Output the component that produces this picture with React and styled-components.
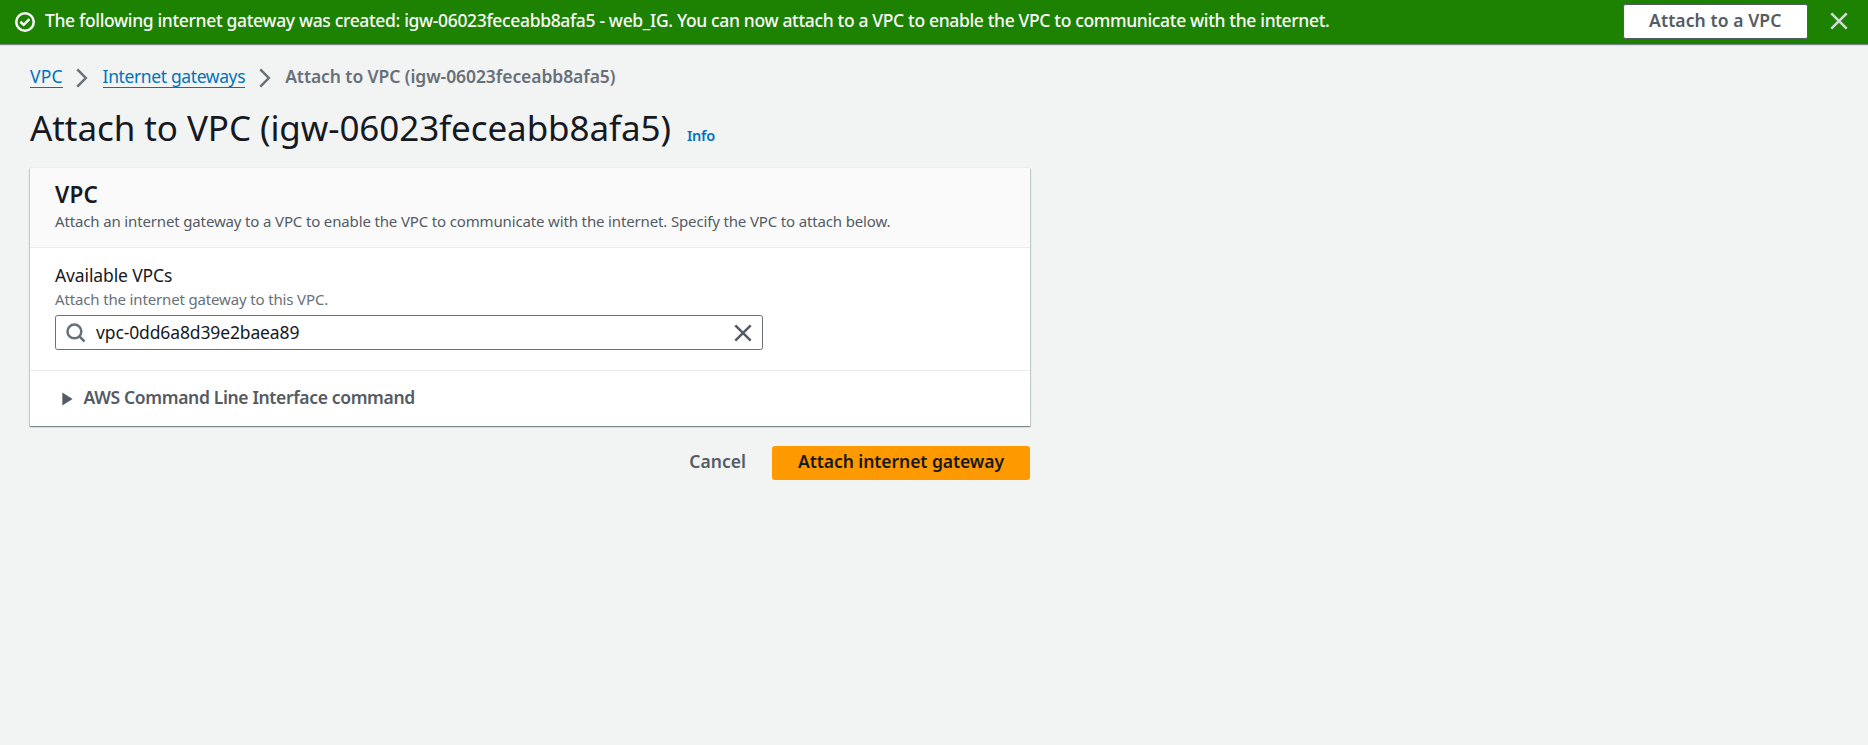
import React from "react";
import styled, { createGlobalStyle } from "styled-components";

const GlobalStyle = createGlobalStyle`
  *, *::before, *::after { box-sizing: border-box; }
  body {
    margin: 0;
    min-height: 100vh;
    background: #f2f3f3;
    color: #16191f;
    font-family: "Noto Sans", "Open Sans", sans-serif;
    font-size: 17.5px;
  }
  button, input { font: inherit; }
`;

const Flashbar = styled.div`
  display: flex;
  align-items: center;
  height: 44px;
  padding: 0 19px 1px 15px;
  background: #1d8102;
  color: #fafafa;
  box-shadow: 0 1px 1px 0 rgba(0, 28, 36, 0.5);
`;

const FlashMessage = styled.p`
  flex: 1;
  margin: 0 0 3px 10px;
  line-height: 28px;
  font-weight: 500;
  letter-spacing: -0.347px;
`;

const Icon = styled.svg`
  display: block;
  flex: none;
  width: 20px;
  height: 20px;
  fill: none;
  stroke: currentColor;
  stroke-width: 2.5;
`;

const FlashIcon = styled(Icon)`
  margin-top: 1px;
`;

const IconButton = styled.button`
  display: flex;
  margin: ${(p) => p.$margin || 0};
  padding: 0;
  border: 0;
  background: none;
  color: ${(p) => p.$color};
`;

const variants = {
  normal: "background: #fff; border-color: #545b64; color: #545b64;",
  primary: "background: #ff9900; border-color: #ff9900; color: #16191f;",
  link: "background: transparent; border-color: transparent; color: #545b64;",
};

const Button = styled.button`
  height: ${(p) => p.$height || "34px"};
  padding: 0 25px 4px;
  border: 1px solid;
  border-radius: 2.5px;
  font-weight: 600;
  letter-spacing: ${(p) => p.$tracking};
  white-space: nowrap;
  line-height: 28px;
  ${(p) => variants[p.$variant]}
`;

const Main = styled.main`
  width: 1030px;
  padding: 18px 0 0 30px;
`;

const Breadcrumbs = styled.nav`
  display: flex;
  align-items: center;
  height: 28px;
  line-height: 22px;
`;

const Crumb = styled.a`
  border-bottom: 1px solid #0073bb;
  color: #0073bb;
  letter-spacing: ${(p) => p.$tracking || 0};
`;

const CurrentCrumb = styled.span`
  color: #687078;
  font-weight: 600;
  letter-spacing: -0.075px;
`;

const Chevron = styled(Icon)`
  margin: 4px 14.5px 0 13.5px;
  width: 12px;
  color: #687078;
`;

const TitleRow = styled.div`
  display: flex;
  align-items: baseline;
  height: 44px;
  margin-top: 16px;
`;

const Title = styled.h1`
  margin: 0;
  font-size: 35px;
  line-height: 44px;
  font-weight: 400;
  letter-spacing: -0.08px;
`;

const InfoLink = styled.a`
  margin-left: 16px;
  color: #0073bb;
  font-size: 14.5px;
  font-weight: 600;
  letter-spacing: -0.25px;
`;

const Card = styled.section`
  margin-top: 18px;
  background: #fff;
  box-shadow: 0 -1px 0 0 #eaeded, 0 1px 1px 0 rgba(0, 28, 36, 0.3),
    1px 1px 1px 0 rgba(0, 28, 36, 0.15), -1px 1px 1px 0 rgba(0, 28, 36, 0.15);
`;

const CardHeader = styled.header`
  height: 80px;
  padding: 13px 25px 0;
  background: #fafafa;
  border-bottom: 1px solid #eaeded;
`;

const CardTitle = styled.h2`
  margin: 0;
  font-size: 22.5px;
  line-height: 28px;
  font-weight: 600;
  letter-spacing: 0.2px;
`;

const CardDescription = styled.p`
  margin: 1px 0 0;
  color: #545b64;
  font-size: 15px;
  line-height: 23px;
  letter-spacing: -0.146px;
`;

const CardBody = styled.div`
  padding: 16px 25px 20px;
`;

const Label = styled.label`
  display: block;
  line-height: 23px;
  letter-spacing: -0.12px;
`;

const Hint = styled.div`
  margin-top: 1px;
  color: #687078;
  font-size: 15px;
  line-height: 22px;
  letter-spacing: -0.15px;
`;

const SearchField = styled.div`
  display: flex;
  align-items: center;
  width: 708px;
  height: 35px;
  margin-top: 5px;
  padding: 0 9px 0 9.5px;
  border: 1px solid #687078;
  border-radius: 2.5px;
  background: #fff;
  color: #687078;
`;

const SearchInput = styled.input`
  flex: 1;
  margin: 0 0 1px 10.5px;
  padding: 0;
  border: 0;
  outline: 0;
  background: none;
  color: #16191f;
  letter-spacing: -0.13px;
`;

const Expandable = styled.div`
  display: flex;
  align-items: center;
  height: 56px;
  padding: 0 31.5px 3px;
  border-top: 1px solid #eaeded;
  color: #545b64;
  font-weight: 600;
  letter-spacing: -0.35px;
`;

const Caret = styled.svg`
  width: 11px;
  height: 14px;
  margin: 3px 11px 0 0;
  fill: currentColor;
`;

const Actions = styled.footer`
  display: flex;
  justify-content: flex-end;
  margin-top: 20px;
`;

const CloseIcon = () => (
  <Icon viewBox="0 0 20 20">
    <path d="M2.3 2.3 17.7 17.7M17.7 2.3 2.3 17.7" />
  </Icon>
);

const Separator = () => (
  <Chevron viewBox="0 0 12 20">
    <path d="M1.3 1.3 9.8 10 1.3 18.7" />
  </Chevron>
);

export default function App() {
  return (
    <>
      <GlobalStyle />
      <Flashbar>
        <FlashIcon viewBox="0 0 20 20">
          <circle cx="10" cy="10" r="8.75" />
          <path d="M5.3 9.8 8.7 12.8 14.4 7.2" />
        </FlashIcon>
        <FlashMessage>
          The following internet gateway was created: igw-06023feceabb8afa5 - web_IG. You can now attach to a VPC to
          enable the VPC to communicate with the internet.
        </FlashMessage>
        <Button $variant="normal" $height="35px" $tracking="0.1px">Attach to a VPC</Button>
        <IconButton $color="#d5dbdb" $margin="0 0 1px 21.5px" aria-label="Dismiss"><CloseIcon /></IconButton>
      </Flashbar>
      <Main>
        <Breadcrumbs>
          <Crumb $tracking="0.15px">VPC</Crumb>
          <Separator />
          <Crumb $tracking="-0.38px">Internet gateways</Crumb>
          <Separator />
          <CurrentCrumb>Attach to VPC (igw-06023feceabb8afa5)</CurrentCrumb>
        </Breadcrumbs>
        <TitleRow>
          <Title>Attach to VPC (igw-06023feceabb8afa5)</Title>
          <InfoLink>Info</InfoLink>
        </TitleRow>
        <Card>
          <CardHeader>
            <CardTitle>VPC</CardTitle>
            <CardDescription>
              Attach an internet gateway to a VPC to enable the VPC to communicate with the internet. Specify the VPC to
              attach below.
            </CardDescription>
          </CardHeader>
          <CardBody>
            <Label htmlFor="vpc">Available VPCs</Label>
            <Hint>Attach the internet gateway to this VPC.</Hint>
            <SearchField>
              <Icon viewBox="0 0 20 20">
                <circle cx="8.4" cy="8.4" r="6.9" />
                <path d="M13.2 13.2 18.5 18.5" />
              </Icon>
              <SearchInput id="vpc" defaultValue="vpc-0dd6a8d39e2baea89" />
              <IconButton $color="#545b64" aria-label="Clear"><CloseIcon /></IconButton>
            </SearchField>
          </CardBody>
          <Expandable>
            <Caret viewBox="0 0 11 14"><path d="M0.3 0.5 10.6 7 0.3 13.5Z" /></Caret>
            AWS Command Line Interface command
          </Expandable>
        </Card>
        <Actions>
          <Button $variant="link" $tracking="0.03px">Cancel</Button>
          <Button $variant="primary" $tracking="-0.06px">Attach internet gateway</Button>
        </Actions>
      </Main>
    </>
  );
}
